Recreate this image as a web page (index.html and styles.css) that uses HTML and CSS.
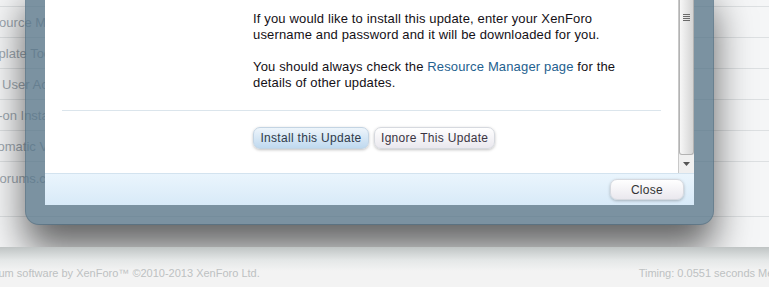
FILE: index.html
```html
<!DOCTYPE html>
<html>
<head>
<meta charset="utf-8">
<link rel="stylesheet" href="styles.css">
</head>
<body>
<div class="page">
  <div class="rows">
    <div class="row"><span class="cell c1">Resource Manager</span></div>
    <div class="row"><span class="cell c2">Template Tools</span></div>
    <div class="row"><span class="cell c3">Email User Accounts</span></div>
    <div class="row"><span class="cell c4">Add-on Install</span></div>
    <div class="row"><span class="cell c5">Automatic Versions</span></div>
    <div class="row last"><span class="cell c6">forums.com</span></div>
  </div>
  <div class="footer">
    <span class="copy">Forum software by XenForo™ ©2010-2013 XenForo Ltd.</span>
    <span class="timing">Timing: 0.0551 seconds Memory: 7.215 MB</span>
  </div>
</div>

<div class="overlay">
  <div class="dlg-body">
    <div class="content">
      <div class="msg">
        <p>If you would like to install this update, enter your XenForo<br>username and password and it will be downloaded for you.</p>
        <p>You should always check the <a href="#" class="link">Resource Manager page</a> for the<br>details of other updates.</p>
      </div>
      <div class="sep"></div>
      <div class="actions">
        <button class="btn primary">Install this Update</button>
        <button class="btn">Ignore This Update</button>
      </div>
    </div>
    <div class="scrollbar">
      <div class="thumb">
        <div class="grip"><i></i><i></i><i></i><i></i></div>
      </div>
      <div class="arrow">
        <svg width="7" height="4" viewBox="0 0 7 4"><path d="M0 0H7L3.5 4Z" fill="#555"/></svg>
      </div>
    </div>
  </div>
  <div class="dlg-footer">
    <button class="btn close">Close</button>
  </div>
</div>
</body>
</html>
```
FILE: styles.css
```css
html, body {
  margin: 0;
  padding: 0;
  overflow: hidden;
}
body {
  width: 769px;
  height: 287px;
  position: relative;
  font-family: "Liberation Sans", Arial, sans-serif;
  background: #f3f3f3;
}
.page {
  display: flex;
  flex-direction: column;
  height: 287px;
}
.rows {
  height: 247px;
  box-sizing: border-box;
  padding-top: 6px;
  background: #f5f6f7;
}
.row {
  height: 30px;
  border-top: 1px solid #dde0e2;
  display: flex;
  align-items: center;
  white-space: nowrap;
  font-size: 13px;
  color: #9ea8b0;
}
.row.last {
  border-bottom: 1px solid #dde0e2;
  align-items: flex-start;
  padding-top: 9px;
  box-sizing: border-box;
  height: 56px;
}
.c1 { margin-left: -24px; }
.c2 { margin-left: -26px; }
.c3 { margin-left: -34px; }
.c4 { margin-left: -25px; }
.c5 { margin-left: -22px; }
.c6 { margin-left: -4px; }

.footer {
  position: relative;
  z-index: 2;
  height: 40px;
  box-sizing: border-box;
  padding-top: 20px;
  display: flex;
  justify-content: space-between;
  white-space: nowrap;
  font-size: 11px;
  color: #bdc1c2;
  background: linear-gradient(#bfc4c4, #e4e7e7 13px, #f3f3f3 24px);
}
.copy { margin-left: -18px; }
.timing { margin-right: -82px; }

.overlay {
  position: absolute;
  z-index: 1;
  left: 25px;
  top: -20px;
  width: 649px;
  border: 20px solid rgba(84, 115, 134, 0.76);
  border-radius: 14px;
  background: #fff;
  background-clip: padding-box;
  box-shadow: 0 24px 38px rgba(0, 0, 0, 0.6);
}
.dlg-body {
  display: flex;
  height: 173px;
}
.content {
  flex: 1;
  padding: 0 17px;
}
.msg {
  padding: 11px 0 0 191px;
  font-size: 13px;
  line-height: 16px;
  letter-spacing: 0.15px;
  color: #141016;
}
.msg p {
  margin: 0 0 16px;
}
.link {
  color: #24618f;
  text-decoration: none;
}
.sep {
  margin-top: 19px;
  border-top: 1px solid #dbe5ec;
}
.actions {
  padding: 16px 0 0 191px;
  display: flex;
  gap: 5px;
}
.btn {
  height: 22px;
  padding: 0 6px;
  border: 1px solid #d6d9df;
  border-radius: 7px;
  font-family: "Liberation Sans", Arial, sans-serif;
  font-size: 12px;
  letter-spacing: 0.3px;
  color: #3a3442;
  background: linear-gradient(#ffffff, #eae8ee);
  box-shadow: 0 1px 3px rgba(0, 0, 0, 0.25);
  cursor: pointer;
}
.btn.primary {
  width: 116px;
  color: #2f3a4a;
  border-color: #c3d4e3;
  background: linear-gradient(#eef5fb, #bfd9ef);
}
.btn.close {
  width: 74px;
  height: 21px;
  color: #333;
}

.scrollbar {
  width: 15px;
  border-left: 1px solid #c9c9c9;
  background: #f0f0f0;
  display: flex;
  flex-direction: column;
}
.thumb {
  height: 155px;
  box-sizing: border-box;
  border: 1px solid #b3b3b3;
  border-top: none;
  border-radius: 0 0 3px 3px;
  background: linear-gradient(90deg, #f7f7f7, #e2e2e2 60%, #d4d4d4);
  display: flex;
  justify-content: center;
  padding-top: 14px;
}
.grip {
  display: flex;
  flex-direction: column;
  gap: 1px;
}
.grip i {
  display: block;
  width: 7px;
  height: 1px;
  background: #6a6a6a;
}
.arrow {
  flex: 1;
  display: flex;
  align-items: center;
  justify-content: center;
}
.dlg-footer {
  height: 31px;
  border-top: 1px solid #d3e3ef;
  background: linear-gradient(#eaf5fd, #d8eaf8);
  display: flex;
  align-items: center;
  justify-content: flex-end;
  padding-right: 10px;
}
```
